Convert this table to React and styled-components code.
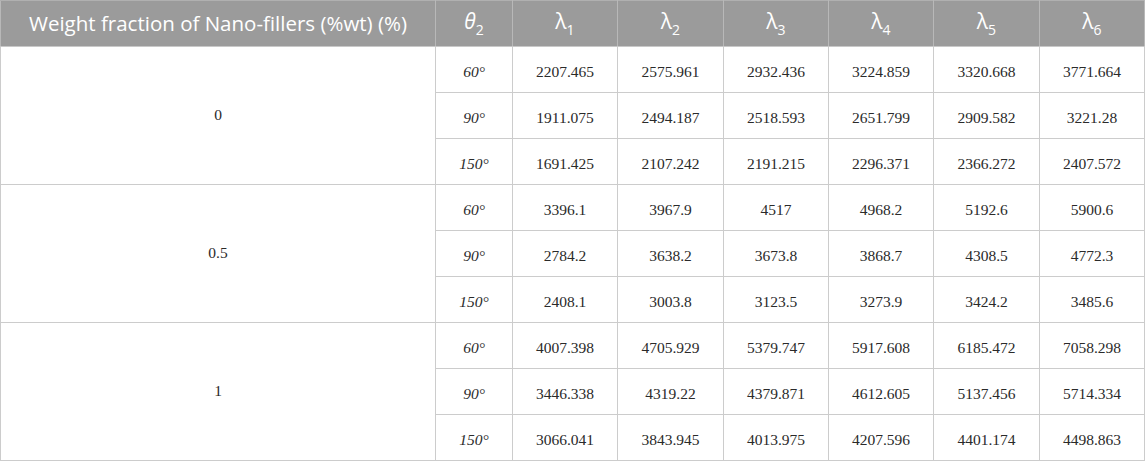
import React from "react";
import styled, { createGlobalStyle } from "styled-components";

const Global = createGlobalStyle`
  html, body { margin: 0; padding: 0; background: #ffffff; }
`;

const Table = styled.table`
  border-collapse: collapse;
  width: 1144px;
  table-layout: fixed;
`;

const HeadCell = styled.th`
  background: #9b9b9b;
  color: #ffffff;
  font-family: "Open Sans", "Noto Sans", sans-serif;
  font-weight: 400;
  font-size: 20.5px;
  height: 45px;
  padding: 0 4px;
  text-align: center;
  vertical-align: middle;
  border-left: 1px solid #b8b8b8;
  border-right: 1px solid #b8b8b8;
  border-top: 1px solid #b0b0b0;
  border-bottom: 1px solid #c8c8c8;
  white-space: nowrap;
  line-height: 1;
`;

const Sym = styled.span`
  font-style: ${(p) => (p.$italic ? "italic" : "normal")};
  font-size: 21px;
  font-family: "Open Sans", "Noto Sans", sans-serif;
`;

const Sub = styled.sub`
  font-size: 14px;
  font-style: normal;
  vertical-align: -6px;
  line-height: 1;
`;

const Cell = styled.td`
  font-family: "Liberation Serif", "Times New Roman", serif;
  font-size: 15.5px;
  color: #2a2a2a;
  font-style: ${(p) => (p.$italic ? "italic" : "normal")};
  text-align: center;
  vertical-align: middle;
  height: 40px;
  padding: ${(p) => (p.$group ? "2px 4px 3px" : "5px 4px 0")};
  border: 1px solid #cccccc;
`;

const groups = [
  {
    w: "0",
    rows: [
      ["60°", "2207.465", "2575.961", "2932.436", "3224.859", "3320.668", "3771.664"],
      ["90°", "1911.075", "2494.187", "2518.593", "2651.799", "2909.582", "3221.28"],
      ["150°", "1691.425", "2107.242", "2191.215", "2296.371", "2366.272", "2407.572"],
    ],
  },
  {
    w: "0.5",
    rows: [
      ["60°", "3396.1", "3967.9", "4517", "4968.2", "5192.6", "5900.6"],
      ["90°", "2784.2", "3638.2", "3673.8", "3868.7", "4308.5", "4772.3"],
      ["150°", "2408.1", "3003.8", "3123.5", "3273.9", "3424.2", "3485.6"],
    ],
  },
  {
    w: "1",
    rows: [
      ["60°", "4007.398", "4705.929", "5379.747", "5917.608", "6185.472", "7058.298"],
      ["90°", "3446.338", "4319.22", "4379.871", "4612.605", "5137.456", "5714.334"],
      ["150°", "3066.041", "3843.945", "4013.975", "4207.596", "4401.174", "4498.863"],
    ],
  },
];

const widths = [435, 77, 105, 106, 105, 105, 106, 105];

export default function App() {
  return (
    <>
      <Global />
      <Table>
        <colgroup>
          {widths.map((w, i) => (
            <col key={i} style={{ width: w }} />
          ))}
        </colgroup>
        <thead>
          <tr>
            <HeadCell>Weight fraction of Nano-fillers (%wt) (%)</HeadCell>
            <HeadCell>
              <Sym $italic>θ</Sym>
              <Sub>2</Sub>
            </HeadCell>
            {[1, 2, 3, 4, 5, 6].map((n) => (
              <HeadCell key={n}>
                <Sym>λ</Sym>
                <Sub>{n}</Sub>
              </HeadCell>
            ))}
          </tr>
        </thead>
        <tbody>
          {groups.map((g) =>
            g.rows.map((r, i) => (
              <tr key={g.w + i}>
                {i === 0 && (
                  <Cell $group rowSpan={3}>
                    {g.w}
                  </Cell>
                )}
                <Cell $italic>{r[0]}</Cell>
                {r.slice(1).map((v, j) => (
                  <Cell key={j}>{v}</Cell>
                ))}
              </tr>
            ))
          )}
        </tbody>
      </Table>
    </>
  );
}
